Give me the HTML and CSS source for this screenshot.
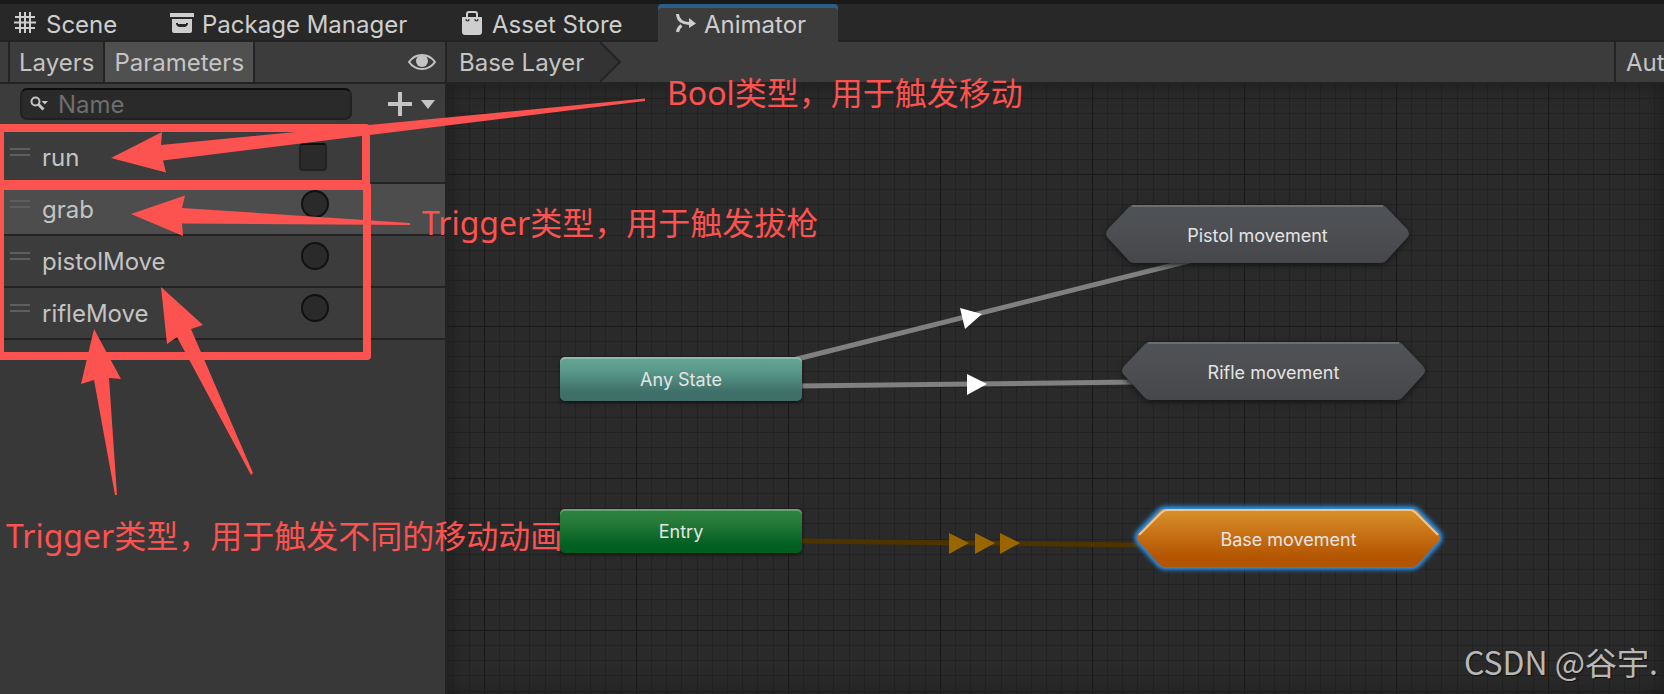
FILE: index.html
```html
<!DOCTYPE html>
<html lang="zh-CN">
<head>
<meta charset="utf-8">
<meta name="viewport" content="width=device-width, initial-scale=1">
<title>Animator</title>
<link rel="stylesheet" href="styles.css">
</head>
<body>
<div class="editor">
  <nav class="tabs">
    <button class="tab tab-scene" type="button">
      <svg class="icon" width="22" height="22" viewBox="0 0 22 22" fill="none" stroke="currentColor" stroke-width="2"><path d="M6 0v21M11 0v21M16 0v21M1 5h20M0 10.500h22M1 16h20"/></svg>
      <span>Scene</span>
    </button>
    <button class="tab tab-package" type="button">
      <svg class="icon" width="24" height="22" viewBox="0 0 24 22" fill="currentColor"><path d="M0 1h24v4H0z"/><path fill-rule="evenodd" d="M2 7h20v12q0 2-2 2H4q-2 0-2-2zM6 11v1q1 3 3 3h6q2 0 3-3v-1h-2v1H8v-1z"/></svg>
      <span>Package Manager</span>
    </button>
    <button class="tab tab-store" type="button">
      <svg class="icon" width="20" height="24" viewBox="0 0 20 24"><path fill="currentColor" d="M0 6h20v15q0 3-3 3H3q-3 0-3-3z"/><path fill="none" stroke="currentColor" stroke-width="2" d="M5 6V3q0-2 2-2h6q2 0 2 2v3"/><path fill="none" stroke="#282828" stroke-width="1.200" d="M4 8q0 2 1.500 2T7 8M13 8q0 2 1.500 2T16 8"/></svg>
      <span>Asset Store</span>
    </button>
    <button class="tab tab-animator" type="button" aria-current="page">
      <svg class="icon" width="20" height="20" viewBox="0 0 20 20"><path fill="none" stroke="currentColor" stroke-width="3" d="M1.500 1q.5 9 12 9.500M1.500 19q.5-4 4-6.500"/><path fill="currentColor" d="M13 5l7 5.500-7 4.500z"/></svg>
      <span>Animator</span>
    </button>
  </nav>
  <main class="work">
    <aside class="side">
      <div class="bar">
        <button class="mode" type="button">Layers</button>
        <button class="mode mode-on" type="button">Parameters</button>
        <button class="plain eye" type="button" aria-label="Toggle panel">
          <svg class="icon" width="28" height="18" viewBox="0 0 28 18"><path fill="none" stroke="currentColor" stroke-width="2" d="M1 9Q6 2 14 2t13 7q-5 7-13 7T1 9z"/><circle cx="14" cy="8" r="6" fill="currentColor"/></svg>
        </button>
      </div>
      <div class="search-row">
        <label class="search">
          <svg class="icon" width="18" height="16" viewBox="0 0 18 16"><circle cx="5.500" cy="5.500" r="4" fill="none" stroke="currentColor" stroke-width="2"/><path d="M8.500 8.500l5 5" stroke="currentColor" stroke-width="3"/><path fill="currentColor" d="M11.500 5h6.500l-3.200 3.500z"/></svg>
          <input type="text" placeholder="Name" aria-label="Name">
        </label>
        <button class="plain add" type="button" aria-label="Add parameter">
          <svg class="icon" width="48" height="24" viewBox="0 0 48 24" fill="currentColor"><path d="M10 0h4v10h10v4H14v10h-4V14H0v-4h10zM33 8h14l-7 9z"/></svg>
        </button>
      </div>
      <ul class="params">
        <li class="param"><span class="grip"></span><label for="p-run">run</label><input id="p-run" class="check" type="checkbox"></li>
        <li class="param param-on"><span class="grip"></span><label for="p-grab">grab</label><input id="p-grab" class="trigger" type="radio" name="grab"></li>
        <li class="param"><span class="grip"></span><label for="p-pistol">pistolMove</label><input id="p-pistol" class="trigger" type="radio" name="pistol"></li>
        <li class="param"><span class="grip"></span><label for="p-rifle">rifleMove</label><input id="p-rifle" class="trigger" type="radio" name="rifle"></li>
      </ul>
    </aside>
    <section class="stage">
      <div class="bar">
        <button class="crumb" type="button">Base Layer</button>
        <svg class="crumb-tip" width="22" height="40" viewBox="0 0 22 40"><path fill="#333" d="M0 0l20 20L0 40z"/><path fill="none" stroke="#232323" stroke-width="2" d="M0 0l20 20L0 40"/></svg>
        <button class="auto" type="button">Aut</button>
      </div>
      <div class="graph">
        <svg class="wires" width="100%" height="100%">
          <defs>
            <pattern id="grid" x="37" y="90" width="152" height="152" patternUnits="userSpaceOnUse">
              <path fill="#222" d="M15 0h1v152h-1zM30 0h1v152h-1zM45 0h1v152h-1zM61 0h1v152h-1zM76 0h1v152h-1zM91 0h1v152h-1zM106 0h1v152h-1zM121 0h1v152h-1zM137 0h1v152h-1zM0 15h152v1H0zM0 30h152v1H0zM0 45h152v1H0zM0 61h152v1H0zM0 76h152v1H0zM0 91h152v1H0zM0 106h152v1H0zM0 121h152v1H0zM0 137h152v1H0z"/>
              <path fill="#191919" d="M0 0h1v152H0zM0 0h152v1H0z"/>
            </pattern>
          </defs>
          <rect width="100%" height="100%" fill="url(#grid)"/>
          <g stroke="#808080" stroke-width="5"><path d="M346 276L790 165"/><path d="M350 302l340-4"/></g>
          <path stroke="#4d3300" stroke-width="5" d="M350 457l345 4"/>
          <g fill="#fff"><path d="M513 224l22 6-17 15z"/><path d="M520 290l20 10-20 11z"/></g>
          <g fill="#996600"><path d="M502 449l20 10-20 11zM528 449l20 10-20 11zM553 449l20 10-20 11z"/></g>
        </svg>
        <div class="node any">Any State</div>
        <div class="node entry">Entry</div>
        <div class="hex pistol"><svg class="hex-shape" width="303" height="58"><use href="#hex" fill="url(#slate)"/><path class="rim" d="M26 1h251"/></svg><span>Pistol movement</span></div>
        <div class="hex rifle"><svg class="hex-shape" width="303" height="58"><use href="#hex" fill="url(#slate)"/><path class="rim" d="M26 1h251"/></svg><span>Rifle movement</span></div>
        <div class="hex base"><svg class="hex-shape" width="303" height="58"><use href="#hex" fill="url(#amber)"/><path class="rim" d="M2 26L24 4q3-3 6-3h243q3 0 6 3l22 22"/></svg><span>Base movement</span></div>
        <svg width="0" height="0">
          <defs>
            <linearGradient id="slate" x2="0" y2="1"><stop offset="0" stop-color="#4e5356"/><stop offset=".4" stop-color="#4e4f53"/><stop offset="1" stop-color="#45474a"/></linearGradient>
            <linearGradient id="amber" x2="0" y2="1"><stop offset="0" stop-color="#d9922b"/><stop offset=".5" stop-color="#c46c12"/><stop offset=".85" stop-color="#b25400"/><stop offset="1" stop-color="#b25400"/></linearGradient>
            <path id="hex" d="M28 0h247q3 0 5 2l21 22q4 5 0 9l-21 23q-2 2-5 2H28q-3 0-5-2L2 33q-4-4 0-9L23 2q2-2 5-2z"/>
          </defs>
        </svg>
      </div>
    </section>
  </main>
  <svg class="marks" width="700" height="520" fill="#fc5250">
    <g fill="none" stroke="#fc5250" stroke-width="8" stroke-linejoin="round"><path d="M0 128h366v56H0z"/><path d="M0 186h367v170H0z"/></g>
    <path d="M111 158l51-26-1 13 484-46.500v2.500l-482 59.500 3 12z"/>
    <path d="M131 214l54-18.500-3 12.500 228 15v2l-228-1.500 1 12.500z"/>
    <path d="M161 287l42 38-12 4 62 144-2 2-74-138-10 7z"/>
    <path d="M94 329l27 50-12-1 8 117h-2L94 380l-13 4z"/>
  </svg>
  <p class="note note-bool">Bool类型，用于触发移动</p>
  <p class="note note-grab">Trigger类型，用于触发拔枪</p>
  <p class="note note-move">Trigger类型，用于触发不同的移动动画</p>
  <p class="credit">CSDN @谷宇.</p>
</div>
</body>
</html>
```
FILE: styles.css
```css
* { box-sizing: border-box; }
body {
  margin: 0;
  background: #282828;
  color: #c4c4c4;
  font: 400 24px/30px Inter, "Noto Sans CJK SC", sans-serif;
}
button {
  margin: 0;
  padding: 0;
  border: 0;
  background: none;
  color: inherit;
  font: inherit;
  white-space: nowrap;
}
.icon { display: block; flex: none; }
.editor {
  position: relative;
  display: flex;
  flex-direction: column;
  height: 100vh;
  overflow: hidden;
}
.tabs {
  display: flex;
  height: 42px;
  flex: none;
  border-top: 4px solid #191919;
  box-shadow: inset 0 -2px #232323;
}
.tab {
  display: flex;
  align-items: center;
  color: #cecece;
}
.tab span { padding-top: 3px; }
.tab-scene { gap: 10px; padding-left: 14px; width: 170px; }
.tab-package { gap: 8px; width: 292px; }
.tab-store { gap: 10px; width: 196px; }
.tab-animator {
  gap: 8px;
  width: 180px;
  padding-left: 18px;
  background: #3c3c3c;
  box-shadow: inset 0 4px #2c5d87;
  border-radius: 4px 4px 0 0;
}
.work { display: flex; flex: 1; min-height: 0; }
.side {
  width: 447px;
  flex: none;
  background: #383838;
  border-right: 2px solid #232323;
}
.bar {
  display: flex;
  height: 42px;
  flex: none;
  background: #3c3c3c;
  border-bottom: 2px solid #232323;
}
.side .bar { padding-left: 8px; }
.mode { padding: 2px 9px 0; border-left: 2px solid #232323; }
.mode-on { background: #505050; border-right: 2px solid #232323; }
.eye { margin-left: auto; padding-right: 9px; }
.search-row {
  display: flex;
  align-items: center;
  justify-content: space-between;
  height: 48px;
  padding: 0 9px 8px 20px;
  background: #3c3c3c;
}
.search {
  display: flex;
  align-items: center;
  gap: 10px;
  width: 332px;
  height: 32px;
  padding-left: 8px;
  background: #2a2a2a;
  border: 2px solid #212121;
  border-top-color: #0d0d0d;
  border-radius: 7px;
}
.search input {
  flex: 1;
  min-width: 0;
  padding: 2px 0 0;
  border: 0;
  outline: 0;
  background: none;
  color: #d2d2d2;
  font: inherit;
}
.search input::placeholder { color: #6e6e6e; }
.params { margin: 0; padding: 0; list-style: none; }
.param {
  display: flex;
  align-items: flex-start;
  height: 52px;
  padding-left: 10px;
  background: #3c3c3c;
  border-bottom: 2px solid #232323;
}
.param-on { background: #4d4d4d; }
.grip {
  width: 20px;
  height: 8px;
  margin-top: 16px;
  border: solid #5e5e5e;
  border-width: 2px 0;
}
.param label { width: 256px; margin: 11px 0 0 12px; }
.check, .trigger {
  appearance: none;
  width: 28px;
  height: 28px;
  margin: 11px 0 0 1px;
  background: #2a2a2a;
  border: 2px solid #212121;
  border-top-color: #0d0d0d;
  border-radius: 4px;
}
.trigger { margin: 6px 0 0 3px; border-color: #111; border-radius: 50%; }
.stage { display: flex; flex-direction: column; flex: 1; min-width: 0; }
.crumb { padding: 2px 2px 0 12px; width: 153px; background: #333; text-align: left; }
.auto {
  width: 50px;
  margin-left: auto;
  padding: 2px 0 0 10px;
  border-left: 2px solid #232323;
  text-align: left;
}
.graph {
  position: relative;
  flex: 1;
  overflow: hidden;
  background: #2a2a2a;
}
.graph::after {
  content: "";
  position: absolute;
  inset: 0;
  box-shadow: inset 0 0 20px #1c1c1c;
}
.wires { position: absolute; inset: 0; }
.node, .hex {
  position: absolute;
  display: grid;
  place-items: center;
  color: #e4e4e4;
  font-size: 18px;
  line-height: 24px;
}
.node {
  left: 113px;
  width: 242px;
  height: 44px;
  padding-top: 2px;
  border-radius: 5px;
  box-shadow: 0 2px 3px #151515, inset 0 2px #ffffff44;
}
.any { top: 273px; background: linear-gradient(#63a593, #5a9a8a 30%, #3e6f69 80%, #3d6e67); }
.entry { top: 425px; background: linear-gradient(#2d843f, #277a39 30%, #026023 80%, #005e20); }
.hex { width: 303px; height: 58px; padding-top: 4px; }
.hex span { position: relative; }
.hex-shape { position: absolute; inset: 0; overflow: visible; filter: drop-shadow(0 2px 3px #151515); }
.rim { fill: none; stroke: #6b6e70; stroke-width: 2; }
.pistol { left: 659px; top: 121px; }
.rifle { left: 675px; top: 258px; }
.base { left: 690px; top: 425px; }
.base .rim { stroke: #f0c48a; }
.base .hex-shape { filter: drop-shadow(0 0 2px #2e8de0) drop-shadow(0 0 2px #2e8de0) drop-shadow(0 0 2px #2e8de0); }
.marks { position: absolute; left: 0; top: 0; pointer-events: none; }
.note, .credit { position: absolute; margin: 0; white-space: nowrap; }
.note {
  color: #fc5250;
  font: 400 32px/40px "Noto Sans", "Noto Sans CJK SC", sans-serif;
}
.note-bool { left: 667px; top: 73px; }
.note-grab { left: 422px; top: 203px; }
.note-move { left: 6px; top: 516px; }
.credit {
  right: 6px;
  bottom: 13px;
  color: #b8b8b8;
  font: 400 32px/40px "Noto Sans CJK SC", sans-serif;
  text-shadow: 1px 1px 1px #111;
}
```
